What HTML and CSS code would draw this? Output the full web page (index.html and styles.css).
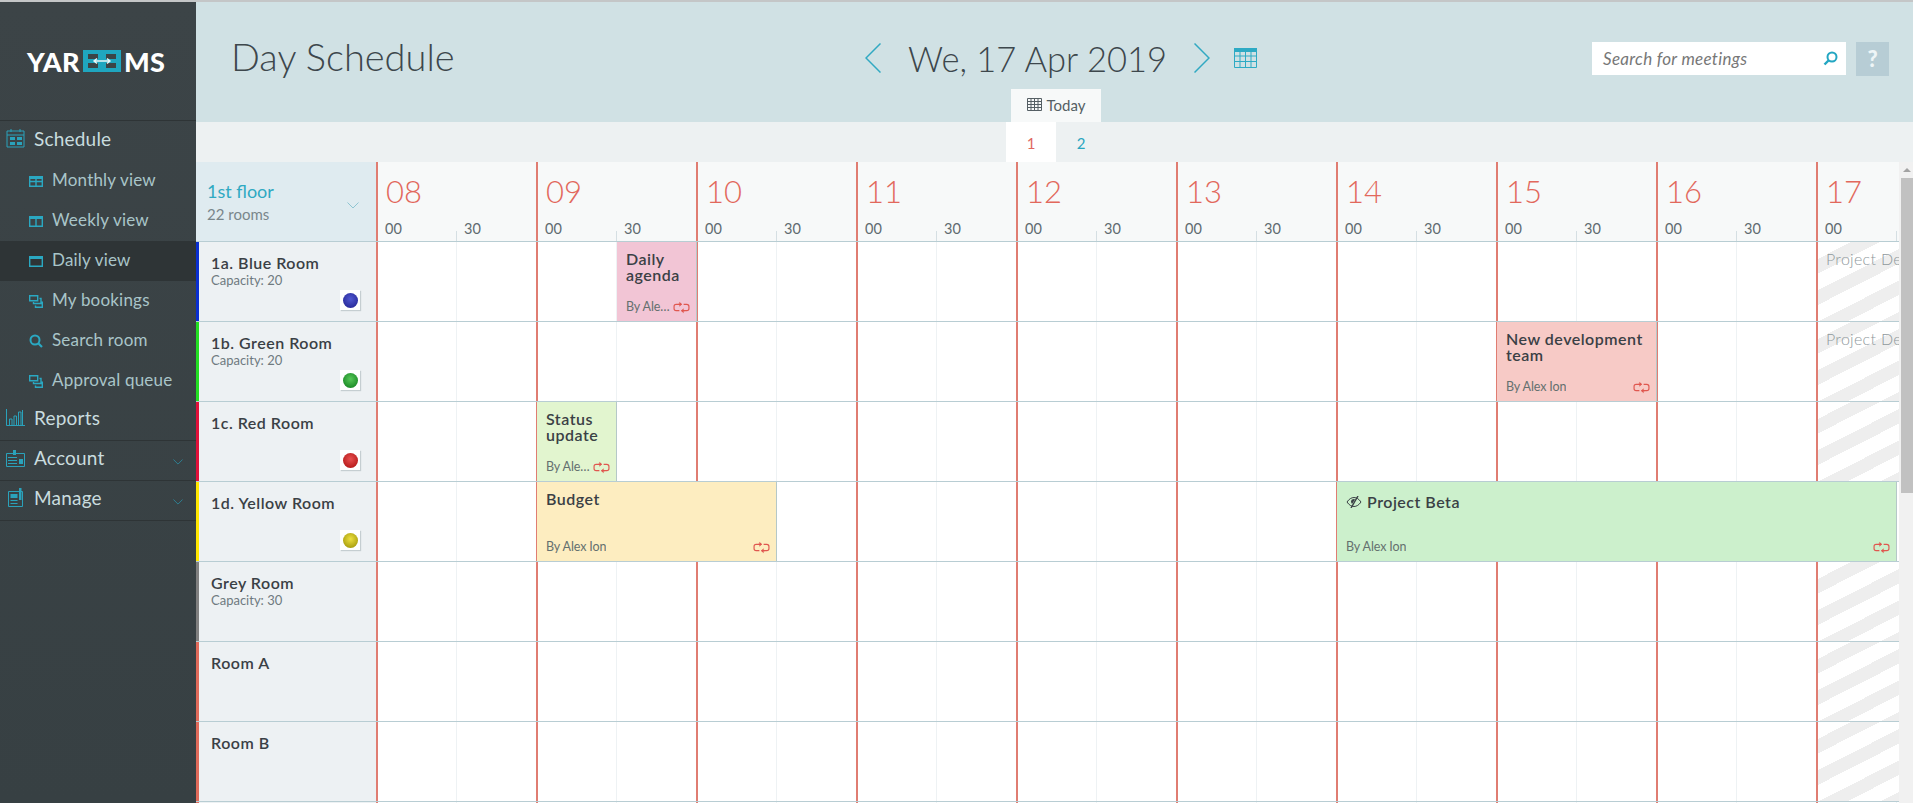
FILE: index.html
```html
<!DOCTYPE html>
<html lang="en">
  <head>
    <meta charset="UTF-8" />
    <title>Day Schedule — YARooms</title>
    <link rel="stylesheet" href="styles.css">
  </head>
  <body>
    <svg class="defs" width="0" height="0" aria-hidden="true">
      <symbol id="i-repeat" viewBox="0 0 16 12">
        <path d="M6 3H3a2 2 0 0 0-2 2v2a2 2 0 0 0 2 2h3M10 3h3a2 2 0 0 1 2 2v2a2 2 0 0 1-2 2h-3" fill="none" stroke="currentColor" stroke-width="1.100"/>
        <path d="M5 3h3M8 9h3" stroke="currentColor" stroke-width="1.100"/>
        <path d="M6 0.500 8.500 3 6 5.200zM10 6.800 7.500 9 10 11.500z" fill="currentColor"/>
      </symbol>
      <symbol id="i-stack" viewBox="0 0 14 13">
        <path d="M.7.7h8v5h-8zM10.500 3.500h1.500v5H4.500V7M13.300 6.500v5.800H6.500V10.500" fill="none" stroke="currentColor" stroke-width="1.400"/>
      </symbol>
      <symbol id="i-chevron" viewBox="0 0 12 7">
        <path d="M.5.5 6 6l5.500-5.500" fill="none" stroke="currentColor" stroke-width="1"/>
      </symbol>
    </svg>

    <div class="app">
      <aside class="sidebar">
        <div class="logo">
          <span>YAR</span>
          <svg class="logo-mark" viewBox="0 0 38 22" width="38" height="22">
            <rect width="38" height="22" fill="#1fa6bf"/>
            <path d="M5 4h10v5H5zM5 13h10v5H5zM23 4h10v5H23zM23 13h10v5H23z" fill="#3b4446"/>
            <path d="M11 11h16M14 8.500 11 11l3 2.500M24 8.500l3 2.500-3 2.500" fill="none" stroke="#e9f6f8" stroke-width="1.400"/>
          </svg>
          <span>MS</span>
        </div>

        <nav class="nav">
          <a class="nav-main">
            <svg class="main-icon main-tall" viewBox="0 0 19 20" width="19" height="20"><path d="M1 3h17v16H1zM1 7h17M5 1v3M14 1v3" fill="none" stroke="currentColor"/><path d="M4 9h5v3H4zM11 9h5v3h-5zM4 14h5v3H4zM11 14h5v3h-5z" fill="currentColor"/></svg>
            Schedule
          </a>
          <a class="nav-sub">
            <svg viewBox="0 0 14 12" width="14" height="12"><path d="M.7 1.700h12.600v9.600H.7zM.7 6.500h12.600M7 1.700v9.600" fill="none" stroke="currentColor" stroke-width="1.400"/><path d="M0 1h14v3H0z" fill="currentColor"/></svg>
            Monthly view
          </a>
          <a class="nav-sub">
            <svg viewBox="0 0 14 12" width="14" height="12"><path d="M.7 2h12.600v9.300H.7zM7 2v9.300" fill="none" stroke="currentColor" stroke-width="1.400"/><path d="M0 1h14v3H0z" fill="currentColor"/></svg>
            Weekly view
          </a>
          <a class="nav-sub active">
            <svg viewBox="0 0 14 12" width="14" height="12"><path d="M.7 2h12.600v9.300H.7z" fill="none" stroke="currentColor" stroke-width="1.400"/><path d="M0 1h14v3H0z" fill="currentColor"/></svg>
            Daily view
          </a>
          <a class="nav-sub"><svg width="14" height="13"><use href="#i-stack"/></svg>My bookings</a>
          <a class="nav-sub">
            <svg viewBox="0 0 14 14" width="14" height="14"><circle cx="6" cy="6" r="4.500" fill="none" stroke="currentColor" stroke-width="2"/><path d="M9.500 9.500 13 13" stroke="currentColor" stroke-width="2.200"/></svg>
            Search room
          </a>
          <a class="nav-sub"><svg width="14" height="13"><use href="#i-stack"/></svg>Approval queue</a>
          <a class="nav-main">
            <svg class="main-icon" viewBox="0 0 19 17" width="19" height="17"><path d="M.5 0v16.500H19M3.500 16v-6h2.500v6M8 16V7h2.500v9M12.500 16V3H15v13M16.500 16V1" fill="none" stroke="currentColor"/></svg>
            Reports
          </a>
          <a class="nav-main">
            <svg class="main-icon" viewBox="0 0 19 18" width="19" height="18"><path d="M.5 4.500h18v13H.5z" fill="none" stroke="currentColor"/><path d="M7 1h3v5H7zM2 8h9v1H2zM2 11h9v1H2zM2 14h9v1H2zM13 10h4v5h-4z" fill="currentColor"/></svg>
            Account
            <svg class="nav-chevron" width="10" height="6"><use href="#i-chevron"/></svg>
          </a>
          <a class="nav-main">
            <svg class="main-icon main-tall" viewBox="0 0 19 19" width="19" height="19"><path d="M2.500 3.500h14v15h-14z" fill="none" stroke="currentColor"/><path d="M4.500 6h7v4h-7zM4.500 12h7v1h-7zM4.500 15h7v1h-7zM13 0h2.500v12H13z" fill="currentColor"/></svg>
            Manage
            <svg class="nav-chevron" width="10" height="6"><use href="#i-chevron"/></svg>
          </a>
        </nav>
      </aside>

      <main class="content">
        <header class="top">
          <h1>Day Schedule</h1>
          <div class="date-col">
            <div class="date-row">
              <svg class="date-arrow" viewBox="0 0 16 30" width="16" height="30"><path d="M15.500.5 1 15l14.500 14.500" fill="none" stroke="currentColor" stroke-width="1.500"/></svg>
              <span class="date">We, 17 Apr 2019</span>
              <svg class="date-arrow" viewBox="0 0 16 30" width="16" height="30"><path d="M.5.5 15 15 .5 29.500" fill="none" stroke="currentColor" stroke-width="1.500"/></svg>
              <svg class="date-cal" viewBox="0 0 23 20" width="23" height="20"><path d="M.5 .5h22v19H.5zM.5 8h22M.5 13.500h22M6 4v15M11.500 4v15M17 4v15" fill="none" stroke="currentColor"/><path d="M0 0h23v4H0z" fill="currentColor"/></svg>
            </div>
            <a class="today">
              <svg viewBox="0 0 15 13" width="15" height="13"><path d="M.5.5h14v12H.5zM.5 3.500h14M.5 6.500h14M.5 9.500h14M4 .5v12M7.500.5v12M11 .5v12" fill="none" stroke="currentColor" stroke-width="1"/></svg>
              Today
            </a>
          </div>
          <div class="tools">
            <div class="search">
              <span>Search for meetings</span>
              <svg viewBox="0 0 15 15" width="15" height="15"><circle cx="9" cy="6" r="4.500" fill="none" stroke="currentColor" stroke-width="2"/><path d="M5.500 9.500 1.500 13.500" stroke="currentColor" stroke-width="2.400"/></svg>
            </div>
            <a class="help">?</a>
          </div>
        </header>

        <div class="floors">
          <a class="floor-tab current">1</a>
          <a class="floor-tab">2</a>
        </div>

        <div class="board">
          <div class="grid">
            <div class="row row-head">
              <div class="floor-cell">
                <div>
                  <div class="floor-name">1st floor</div>
                  <div class="floor-count">22 rooms</div>
                </div>
                <svg class="floor-chevron" width="12" height="7"><use href="#i-chevron"/></svg>
              </div>
              <div class="hours">
                <div class="hour"><b>08</b><div class="mins"><span>00</span><span>30</span></div></div>
                <div class="hour"><b>09</b><div class="mins"><span>00</span><span>30</span></div></div>
                <div class="hour"><b>10</b><div class="mins"><span>00</span><span>30</span></div></div>
                <div class="hour"><b>11</b><div class="mins"><span>00</span><span>30</span></div></div>
                <div class="hour"><b>12</b><div class="mins"><span>00</span><span>30</span></div></div>
                <div class="hour"><b>13</b><div class="mins"><span>00</span><span>30</span></div></div>
                <div class="hour"><b>14</b><div class="mins"><span>00</span><span>30</span></div></div>
                <div class="hour"><b>15</b><div class="mins"><span>00</span><span>30</span></div></div>
                <div class="hour"><b>16</b><div class="mins"><span>00</span><span>30</span></div></div>
                <div class="hour"><b>17</b><div class="mins"><span>00</span><span></span></div></div>
              </div>
            </div>

            <div class="row">
              <div class="room room-blue">
                <div class="room-name">1a. Blue Room</div>
                <div class="room-cap">Capacity: 20</div>
                <span class="ball ball-blue"><i></i></span>
              </div>
              <div class="slots">
                <div class="event pink" style="grid-column: 4 / span 1">
                  <div class="event-title">Daily agenda</div>
                  <div class="event-foot"><span>By Alex Ion</span><svg width="17" height="13"><use href="#i-repeat"/></svg></div>
                </div>
                <div class="blocked" style="grid-column: 19 / span 2">Project De</div>
              </div>
            </div>

            <div class="row">
              <div class="room room-green">
                <div class="room-name">1b. Green Room</div>
                <div class="room-cap">Capacity: 20</div>
                <span class="ball ball-green"><i></i></span>
              </div>
              <div class="slots">
                <div class="event rose" style="grid-column: 15 / span 2">
                  <div class="event-title">New development team</div>
                  <div class="event-foot"><span>By Alex Ion</span><svg width="17" height="13"><use href="#i-repeat"/></svg></div>
                </div>
                <div class="blocked" style="grid-column: 19 / span 2">Project De</div>
              </div>
            </div>

            <div class="row">
              <div class="room room-red">
                <div class="room-name">1c. Red Room</div>
                <span class="ball ball-red"><i></i></span>
              </div>
              <div class="slots">
                <div class="event lime" style="grid-column: 3 / span 1">
                  <div class="event-title">Status update</div>
                  <div class="event-foot"><span>By Alex Ion</span><svg width="17" height="13"><use href="#i-repeat"/></svg></div>
                </div>
                <div class="blocked" style="grid-column: 19 / span 2"></div>
              </div>
            </div>

            <div class="row">
              <div class="room room-yellow">
                <div class="room-name">1d. Yellow Room</div>
                <span class="ball ball-yellow"><i></i></span>
              </div>
              <div class="slots">
                <div class="event sand" style="grid-column: 3 / span 3">
                  <div class="event-title">Budget</div>
                  <div class="event-foot"><span>By Alex Ion</span><svg width="17" height="13"><use href="#i-repeat"/></svg></div>
                </div>
                <div class="event mint" style="grid-column: 13 / span 7">
                  <div class="event-title has-icon">
                    <svg viewBox="0 0 16 12" width="16" height="12"><path d="M1 6c2-3 4.500-4.500 7-4.500S13 3 15 6c-2 3-4.500 4.500-7 4.500S3 9 1 6z" fill="none" stroke="currentColor" stroke-width="1"/><path d="M5 6A3 3 0 0 1 8 3L9 3.500 6 8z" fill="currentColor"/><path d="M12 0 5 12" stroke="currentColor" stroke-width="1.400"/></svg>
                    Project Beta
                  </div>
                  <div class="event-foot"><span>By Alex Ion</span><svg width="17" height="13"><use href="#i-repeat"/></svg></div>
                </div>
              </div>
            </div>

            <div class="row">
              <div class="room room-grey">
                <div class="room-name">Grey Room</div>
                <div class="room-cap">Capacity: 30</div>
              </div>
              <div class="slots"><div class="blocked" style="grid-column: 19 / span 2"></div></div>
            </div>

            <div class="row">
              <div class="room room-plain"><div class="room-name">Room A</div></div>
              <div class="slots"><div class="blocked" style="grid-column: 19 / span 2"></div></div>
            </div>

            <div class="row">
              <div class="room room-plain"><div class="room-name">Room B</div></div>
              <div class="slots"><div class="blocked" style="grid-column: 19 / span 2"></div></div>
            </div>

            <div class="row">
              <div class="room room-plain"></div>
              <div class="slots"></div>
            </div>
          </div>

          <div class="scrollbar">
            <span class="scroll-up"></span>
            <span class="scroll-thumb"></span>
          </div>
        </div>
      </main>
    </div>
  </body>
</html>
```

FILE: styles.css
```css
* {
  box-sizing: border-box;
  margin: 0;
  padding: 0;
}

html,
body {
  height: 100%;
  overflow: hidden;
}

body {
  font-family: 'Lato', 'Open Sans', sans-serif;
  color: #333;
  background: #fff;
  border-top: 2px solid #c4c6c7;
}

.defs {
  position: absolute;
}

.app {
  display: flex;
  height: 801px;
}

/* sidebar */

.sidebar {
  flex: none;
  width: 196px;
  background: linear-gradient(#3c4447, #374043);
}

.logo {
  display: flex;
  align-items: center;
  justify-content: center;
  gap: 3px;
  height: 118px;
  padding-right: 4px;
  color: #fff;
  font-size: 27px;
  font-weight: 900;
  letter-spacing: 0.3px;
}

.nav {
  border-top: 1px solid #2e3436;
}

.nav-main {
  display: flex;
  align-items: center;
  height: 40px;
  padding: 0 0 6px 34px;
  position: relative;
  color: #c9dcdf;
  font-size: 19px;
  letter-spacing: 0.2px;
  border-bottom: 1px solid #2e3436;
}

.nav-main:first-child {
  border-bottom: 0;
}

.main-icon {
  position: absolute;
  left: 6px;
  top: 8px;
  color: #2aa2bb;
}

.main-tall {
  top: 7px;
}

.nav-chevron {
  position: absolute;
  right: 13px;
  top: 18px;
  color: #2d8aa0;
}

.nav-sub {
  display: flex;
  align-items: center;
  gap: 9px;
  height: 40px;
  padding: 0 0 4px 29px;
  color: #a9c5c9;
  font-size: 17px;
  letter-spacing: 0.2px;
}

.nav-sub svg {
  margin-top: 4px;
  color: #2aa8c2;
}

.nav-sub.active {
  background: #2e3436;
}

/* top bar */

.content {
  flex: 1;
  min-width: 0;
  display: flex;
  flex-direction: column;
}

.top {
  flex: none;
  display: flex;
  height: 120px;
  padding-left: 35px;
  background: #d0e1e4;
}

.top h1 {
  flex: none;
  width: 634px;
  padding-top: 32px;
  font-size: 38px;
  line-height: 44px;
  font-weight: 300;
  color: #3d474c;
}

.date-col {
  flex: none;
  width: 392px;
  display: flex;
  flex-direction: column;
}

.date-row {
  display: flex;
  align-items: center;
  height: 87px;
  padding-top: 25px;
}

.date {
  width: 319px;
  text-align: center;
  font-size: 34.5px;
  font-weight: 300;
  color: #3d474c;
}

.date-arrow {
  flex: none;
  color: #31a9c2;
}

.date-cal {
  flex: none;
  margin-left: 24px;
  color: #2eaac4;
}

.today {
  display: flex;
  align-items: center;
  justify-content: center;
  gap: 5px;
  width: 90px;
  height: 33px;
  margin-left: 146px;
  padding-bottom: 2px;
  background: #f7f9f9;
  color: #555f64;
  font-size: 15px;
}

.tools {
  display: flex;
  gap: 10px;
  margin-left: 335px;
  padding-top: 40px;
}

.search {
  display: flex;
  align-items: center;
  justify-content: space-between;
  width: 254px;
  height: 33px;
  padding: 0 8px 0 11px;
  background: #fff;
  color: #777;
  font-size: 17px;
  font-style: italic;
  letter-spacing: 0.3px;
}

.search svg {
  color: #23a6c2;
}

.help {
  width: 33px;
  height: 34px;
  background: #b7cdd5;
  color: #eef5f7;
  font-size: 22px;
  font-weight: 900;
  line-height: 34px;
  text-align: center;
}

/* floor tabs */

.floors {
  flex: none;
  display: flex;
  height: 40px;
  padding-left: 810px;
  background: #edf1f2;
}

.floor-tab {
  width: 50px;
  line-height: 42px;
  text-align: center;
  font-size: 15px;
  color: #2aa6c0;
}

.floor-tab.current {
  background: #fff;
  color: #e0675f;
}

/* schedule board */

.board {
  flex: 1;
  min-height: 0;
  display: flex;
}

.grid {
  flex: 1;
  min-width: 0;
  overflow: hidden;
}

.row {
  display: flex;
  height: 80px;
  border-bottom: 1px solid #b8cdd3;
}

.room,
.floor-cell {
  flex: none;
  width: 180px;
}

.floor-cell {
  display: flex;
  align-items: center;
  justify-content: space-between;
  padding: 0 17px 0 11px;
  background: #dfebf0;
}

.floor-name {
  font-size: 18px;
  line-height: 24px;
  color: #2fa9c2;
}

.floor-count {
  font-size: 15px;
  line-height: 22px;
  color: #79868b;
}

.floor-chevron {
  margin-top: 8px;
  color: #8fc5d2;
}

.hours {
  flex: 1;
  display: flex;
  overflow: hidden;
  background: #f7f9f9;
}

.hour {
  flex: none;
  display: flex;
  flex-direction: column;
  width: 160px;
  border-left: 2px solid #e07d72;
}

.hour b {
  padding: 11px 0 0 8px;
  font-size: 31px;
  line-height: 36px;
  font-weight: 300;
  color: #e2685c;
}

.mins {
  display: flex;
  margin-top: auto;
}

.mins span {
  width: 78px;
  height: 22px;
  padding-left: 7px;
  font-size: 14.5px;
  line-height: 20px;
  color: #5f6b70;
}

.mins span + span {
  width: 80px;
  padding-left: 8px;
  background: linear-gradient(#d5dfe3, #d5dfe3) 0 100% / 1px 10px no-repeat;
}

.room {
  display: flex;
  flex-direction: column;
  padding: 13px 16px 11px 12px;
  background: #edf1f3;
  border-left: 3px solid #999;
}

.room-blue { border-left-color: #0a2fd0; }
.room-green { border-left-color: #22dd22; }
.room-red { border-left-color: #e0103a; }
.room-yellow { border-left-color: #ffe600; }
.room-grey { border-left-color: #808080; }
.room-plain { border-left-color: #e06a5a; }

.room-name {
  font-size: 16px;
  line-height: 16px;
  font-weight: 600;
  letter-spacing: 0.5px;
  color: #3a4045;
}

.room-cap {
  padding-top: 1px;
  font-size: 13px;
  line-height: 16px;
  color: #6f7a7f;
}

.ball {
  display: flex;
  align-items: center;
  justify-content: center;
  align-self: flex-end;
  width: 20px;
  height: 20px;
  margin-top: auto;
  background: #fff;
  box-shadow: 1px 1px 1px #c5ced1;
}

.ball i {
  display: block;
  width: 15px;
  height: 15px;
  border-radius: 50%;
}

.ball-blue i { background: radial-gradient(circle at 50% 40%, #5058d0, #2a2c9c 75%); }
.ball-green i { background: radial-gradient(circle at 50% 40%, #58c858, #1d8c28 75%); }
.ball-red i { background: radial-gradient(circle at 50% 40%, #e85050, #b81c1c 75%); }
.ball-yellow i { background: radial-gradient(circle at 50% 40%, #eee040, #aaa010 75%); }

.slots {
  flex: 1;
  min-width: 0;
  display: grid;
  grid-template-columns: repeat(19, 80px) 1fr;
  grid-template-rows: 100%;
  background:
    repeating-linear-gradient(90deg, #e07d72 0 2px, transparent 2px 160px),
    repeating-linear-gradient(90deg, transparent 0 80px, #eef2f4 80px 81px, transparent 81px 160px);
}

.event {
  grid-row: 1;
  display: flex;
  flex-direction: column;
  min-width: 0;
  margin: 0 -1px 0 1px;
  padding: 9px 6px 5px 9px;
  border-right: 1px solid #b5c8c8;
  color: #3a4045;
}

.pink { background: #f2c5d5; }
.rose { background: #f7cac6; }
.lime { background: #e2f5cf; }
.sand { background: #fdedc0; }
.mint { background: #ccf0cc; }

.event-title {
  font-size: 16px;
  line-height: 16px;
  font-weight: 600;
  letter-spacing: 0.5px;
}

.event-title.has-icon {
  display: flex;
  align-items: center;
  gap: 5px;
  padding-top: 3px;
}

.event-foot {
  display: flex;
  align-items: center;
  justify-content: space-between;
  gap: 1px;
  margin-top: auto;
  font-size: 12.5px;
  line-height: 18px;
  letter-spacing: -0.1px;
  color: #64706f;
}

.event-foot span {
  min-width: 0;
  white-space: nowrap;
  overflow: hidden;
  text-overflow: ellipsis;
}

.event-foot svg {
  flex: none;
  color: #e0574f;
}

.blocked {
  grid-row: 1;
  min-width: 0;
  margin-left: 2px;
  padding: 9px 0 0 8px;
  overflow: hidden;
  white-space: nowrap;
  font-size: 16px;
  font-weight: 300;
  line-height: 16px;
  letter-spacing: 0.3px;
  color: #8f999c;
  background: repeating-linear-gradient(153deg, #fff 0 15px, #eeeeee 15px 28px);
}

.scrollbar {
  flex: none;
  display: flex;
  flex-direction: column;
  align-items: flex-end;
  width: 14px;
  padding-top: 6px;
  background: #f1f1f1;
}

.scroll-up {
  width: 0;
  height: 0;
  margin: 0 2px 6px 0;
  border-left: 4px solid transparent;
  border-right: 4px solid transparent;
  border-bottom: 4px solid #a3a3a3;
}

.scroll-thumb {
  width: 12px;
  height: 315px;
  background: #c1c1c1;
}
```
